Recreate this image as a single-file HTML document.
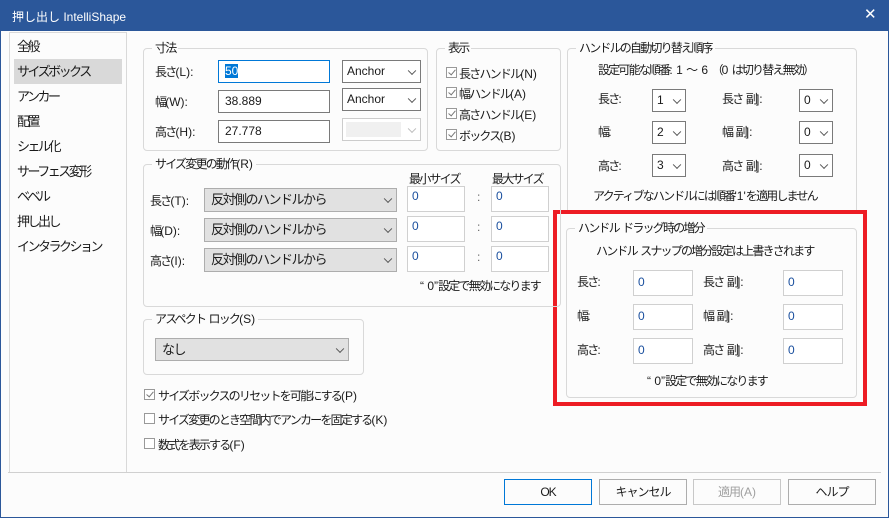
<!DOCTYPE html>
<html><head><meta charset="utf-8"><style>
*{box-sizing:border-box;margin:0;padding:0}
body{width:889px;height:518px;overflow:hidden;background:#fcfcfc;font-family:"Liberation Sans","Noto Sans CJK JP",sans-serif;font-size:12px;color:#1a1a1a;position:relative;letter-spacing:-1.8px}
b{font-weight:normal;letter-spacing:0}
.a{position:absolute;white-space:nowrap}
.win{position:absolute;left:0;top:0;width:889px;height:518px;border:1px solid #2b579a;border-top:none}
.title{position:absolute;left:0;top:0;width:889px;height:31px;background:#2b579a;color:#fff;font-size:12px;letter-spacing:0}
.grp{position:absolute;border:1px solid #d9d9d9;border-radius:4px}
.lg{position:absolute;top:-9px;left:8px;background:#fcfcfc;padding:0 3px;line-height:16px}
.in{position:absolute;background:#fff;border:1px solid #7a7a7a;padding-left:6px;line-height:20px;letter-spacing:0}
.in2{position:absolute;background:#fff;border:1px solid #d0d0d0;padding-left:4px;line-height:18px;color:#1a4f9e;letter-spacing:0}
.sel{position:absolute;background:#fff;border:1px solid #7a7a7a;padding-left:4px;line-height:20px;letter-spacing:0}
.gsel{position:absolute;background:#e1e1e1;border:1px solid #adadad;padding-left:6px;line-height:22px;font-size:13px;letter-spacing:-1.5px}
.chev{position:absolute;right:5px;top:50%;width:6px;height:6px;border-right:1px solid #555;border-bottom:1px solid #555;transform:translateY(-70%) rotate(45deg)}
.cb{position:absolute;width:11px;height:11px;border:1px solid #999;background:#fff}
.cb.k::after{content:"";position:absolute;left:3px;top:0px;width:3px;height:6px;border-right:1.5px solid #777;border-bottom:1.5px solid #777;transform:rotate(40deg)}
.btn{position:absolute;top:479px;width:88px;height:26px;border:1px solid #adadad;background:#fcfcfc;text-align:center;line-height:24px;letter-spacing:-1px}
.li{position:absolute;left:17px;line-height:17px;font-size:13px;letter-spacing:-2.5px}
</style></head><body>
<div class="win"></div>
<div class="title"><span class="a" style="left:12px;top:8px">押し出し IntelliShape</span><span class="a" style="left:864px;top:5px;font-size:15px">✕</span></div>

<div class="a" style="left:9px;top:32px;width:118px;height:441px;border:1px solid #d9d9d9;border-bottom:none"></div>
<div class="a" style="left:14px;top:59px;width:108px;height:25px;background:#d9d9d9"></div>
<div class="li" style="top:38px">全般</div>
<div class="li" style="top:63px">サイズボックス</div>
<div class="li" style="top:88px">アンカー</div>
<div class="li" style="top:113px">配置</div>
<div class="li" style="top:138px">シェル化</div>
<div class="li" style="top:163px">サーフェス変形</div>
<div class="li" style="top:188px">ベベル</div>
<div class="li" style="top:213px">押し出し</div>
<div class="li" style="top:238px">インタラクション</div>
<div class="a" style="left:8px;top:472px;width:873px;height:1px;background:#d0d0d0"></div>

<!-- 寸法 -->
<div class="grp" style="left:143px;top:48px;width:285px;height:103px"><span class="lg">寸法</span></div>
<div class="a" style="left:155px;top:63px">長さ<b>(L):</b></div>
<div class="a" style="left:155px;top:93px">幅<b>(W):</b></div>
<div class="a" style="left:155px;top:123px">高さ<b>(H):</b></div>
<div class="in" style="left:218px;top:60px;width:112px;height:23px;border-color:#0078d7"><span style="background:#0078d7;color:#fff">50</span></div>
<div class="in" style="left:218px;top:90px;width:112px;height:23px">38.889</div>
<div class="in" style="left:218px;top:120px;width:112px;height:23px">27.778</div>
<div class="sel" style="left:342px;top:60px;width:79px;height:23px">Anchor<i class="chev"></i></div>
<div class="sel" style="left:342px;top:88px;width:79px;height:23px">Anchor<i class="chev"></i></div>
<div class="sel" style="left:342px;top:118px;width:79px;height:23px;border-color:#ccc"><div style="position:absolute;left:3px;top:3px;width:55px;height:15px;background:#f0f0f0"></div><i class="chev" style="border-color:#bbb"></i></div>

<!-- 表示 -->
<div class="grp" style="left:436px;top:48px;width:125px;height:103px"><span class="lg">表示</span></div>
<div class="cb k" style="left:446px;top:67px"></div><div class="a" style="left:459px;top:65px">長さハンドル<b>(N)</b></div>
<div class="cb k" style="left:446px;top:87px"></div><div class="a" style="left:459px;top:85px">幅ハンドル<b>(A)</b></div>
<div class="cb k" style="left:446px;top:108px"></div><div class="a" style="left:459px;top:106px">高さハンドル<b>(E)</b></div>
<div class="cb k" style="left:446px;top:129px"></div><div class="a" style="left:459px;top:127px">ボックス<b>(B)</b></div>

<!-- 自動切り替え -->
<div class="grp" style="left:567px;top:48px;width:290px;height:170px"><span class="lg">ハンドルの自動切り替え順序</span></div>
<div class="a" style="left:598px;top:61px">設定可能な順番<b>: 1 ～ 6 </b>（<b>0 </b>は切り替え無効）</div>
<div class="a" style="left:598px;top:90px">長さ<b>:</b></div><div class="a" style="left:598px;top:123px">幅<b>:</b></div><div class="a" style="left:598px;top:157px">高さ<b>:</b></div>
<div class="sel" style="left:652px;top:89px;width:34px;height:23px">1<i class="chev"></i></div>
<div class="sel" style="left:652px;top:121px;width:34px;height:23px">2<i class="chev"></i></div>
<div class="sel" style="left:652px;top:154px;width:34px;height:23px">3<i class="chev"></i></div>
<div class="a" style="left:722px;top:90px">長さ<b> </b>副<b>]:</b></div><div class="a" style="left:722px;top:123px">幅<b> </b>副<b>]:</b></div><div class="a" style="left:722px;top:157px">高さ<b> </b>副<b>]:</b></div>
<div class="sel" style="left:799px;top:89px;width:34px;height:23px">0<i class="chev"></i></div>
<div class="sel" style="left:799px;top:121px;width:34px;height:23px">0<i class="chev"></i></div>
<div class="sel" style="left:799px;top:154px;width:34px;height:23px">0<i class="chev"></i></div>
<div class="a" style="left:593px;top:187px">アクティブなハンドルには順番<b>'1'</b>を適用しません</div>

<!-- red box -->
<div class="a" style="left:553px;top:210px;width:314px;height:196px;border:4px solid #ed1c24;background:#fcfcfc"></div>
<div class="grp" style="left:566px;top:228px;width:291px;height:170px"><span class="lg">ハンドル<b> </b>ドラッグ時の増分</span></div>
<div class="a" style="left:596px;top:242px">ハンドル<b> </b>スナップの増分設定は上書きされます</div>
<div class="a" style="left:577px;top:273px">長さ<b>:</b></div><div class="a" style="left:577px;top:307px">幅<b>:</b></div><div class="a" style="left:577px;top:341px">高さ<b>:</b></div>
<div class="in2" style="left:633px;top:270px;width:60px;height:26px;line-height:22px">0</div>
<div class="in2" style="left:633px;top:304px;width:60px;height:26px;line-height:22px">0</div>
<div class="in2" style="left:633px;top:338px;width:60px;height:26px;line-height:22px">0</div>
<div class="a" style="left:703px;top:273px">長さ<b> </b>副<b>]:</b></div><div class="a" style="left:703px;top:307px">幅<b> </b>副<b>]:</b></div><div class="a" style="left:703px;top:341px">高さ<b> </b>副<b>]:</b></div>
<div class="in2" style="left:783px;top:270px;width:60px;height:26px;line-height:22px">0</div>
<div class="in2" style="left:783px;top:304px;width:60px;height:26px;line-height:22px">0</div>
<div class="in2" style="left:783px;top:338px;width:60px;height:26px;line-height:22px">0</div>
<div class="a" style="left:647px;top:372px"><b>“ 0”</b>設定で無効になります</div>

<!-- サイズ変更の動作 -->
<div class="grp" style="left:143px;top:164px;width:418px;height:143px"><span class="lg">サイズ変更の動作<b>(R)</b></span></div>
<div class="a" style="left:409px;top:170px">最小サイズ</div><div class="a" style="left:492px;top:170px">最大サイズ</div>
<div class="a" style="left:150px;top:192px">長さ<b>(T):</b></div><div class="a" style="left:150px;top:222px">幅<b>(D):</b></div><div class="a" style="left:150px;top:252px">高さ<b>(I):</b></div>
<div class="gsel" style="left:204px;top:188px;width:193px;height:24px">反対側のハンドルから<i class="chev"></i></div>
<div class="gsel" style="left:204px;top:218px;width:193px;height:24px">反対側のハンドルから<i class="chev"></i></div>
<div class="gsel" style="left:204px;top:248px;width:193px;height:24px">反対側のハンドルから<i class="chev"></i></div>
<div class="in2" style="left:407px;top:186px;width:58px;height:26px">0</div>
<div class="in2" style="left:407px;top:216px;width:58px;height:26px">0</div>
<div class="in2" style="left:407px;top:246px;width:58px;height:26px">0</div>
<div class="a" style="left:477px;top:190px;color:#666">:</div><div class="a" style="left:477px;top:220px;color:#666">:</div><div class="a" style="left:477px;top:250px;color:#666">:</div>
<div class="in2" style="left:491px;top:186px;width:58px;height:26px">0</div>
<div class="in2" style="left:491px;top:216px;width:58px;height:26px">0</div>
<div class="in2" style="left:491px;top:246px;width:58px;height:26px">0</div>
<div class="a" style="left:420px;top:277px"><b>“ 0”</b>設定で無効になります</div>

<!-- アスペクト -->
<div class="grp" style="left:143px;top:319px;width:221px;height:56px"><span class="lg">アスペクト<b> </b>ロック<b>(S)</b></span></div>
<div class="gsel" style="left:155px;top:338px;width:194px;height:23px">なし<i class="chev"></i></div>

<div class="cb k" style="left:144px;top:389px"></div><div class="a" style="left:158px;top:387px">サイズボックスのリセットを可能にする<b>(P)</b></div>
<div class="cb" style="left:144px;top:413px"></div><div class="a" style="left:158px;top:411px">サイズ変更のとき空間内でアンカーを固定する<b>(K)</b></div>
<div class="cb" style="left:144px;top:438px"></div><div class="a" style="left:158px;top:436px">数式を表示する<b>(F)</b></div>

<div class="btn" style="left:504px;border-color:#0078d7">OK</div>
<div class="btn" style="left:599px">キャンセル</div>
<div class="btn" style="left:693px;color:#a0a0a0;border-color:#c8c8c8">適用<b>(A)</b></div>
<div class="btn" style="left:788px">ヘルプ</div>
</body></html>
